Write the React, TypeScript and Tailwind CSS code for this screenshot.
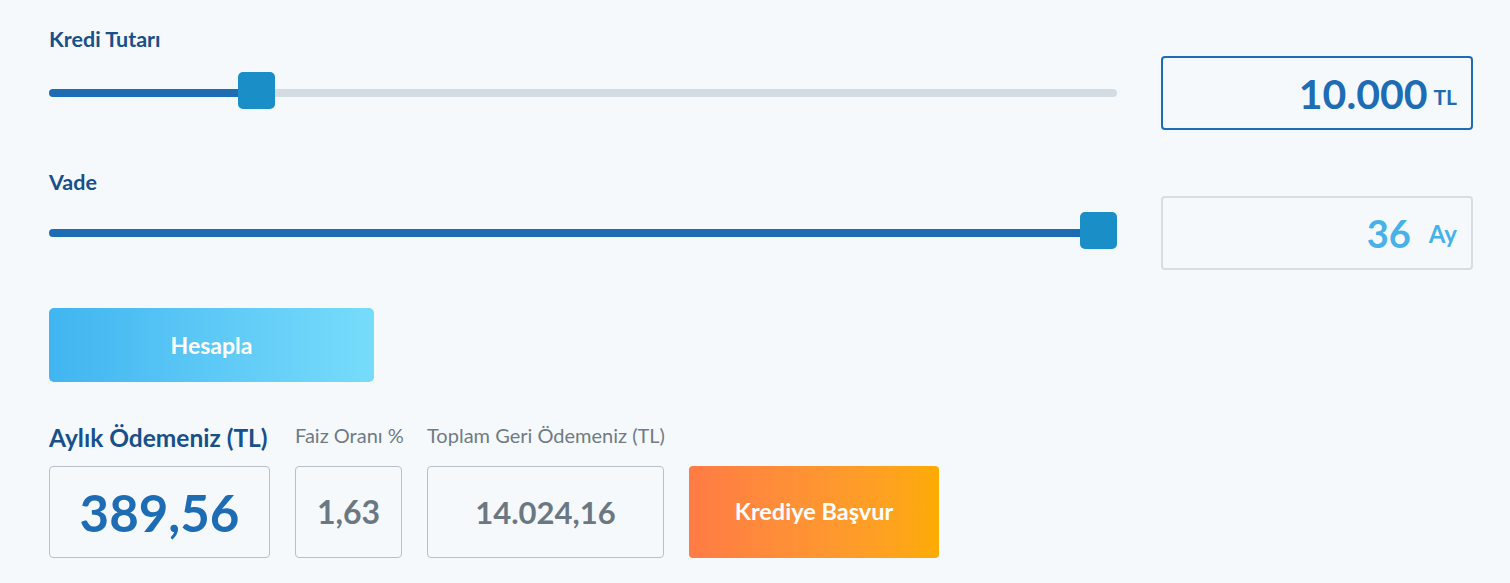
import { useState } from "react";

const FONT = { fontFamily: "Lato, 'Noto Sans', sans-serif" };

const KREDI_MIN = 1000;
const KREDI_MAX = 50000;
const VADE_MIN = 3;
const VADE_MAX = 36;
const THUMB = 37;

function Slider({ value, min, max }: { value: number; min: number; max: number }) {
  const pct = (value - min) / (max - min);
  return (
    <div className="relative flex h-[37px] flex-1 items-center">
      <div className="h-[8px] w-full overflow-hidden rounded-full bg-[#d3dce3]">
        <div
          className="h-full bg-[#1d6cb4]"
          style={{ width: `calc(${pct * 100}% - ${pct * THUMB - THUMB / 2}px)` }}
        />
      </div>
      <div
        className="absolute top-[-3px] h-[37px] w-[37px] rounded-[5px] bg-[#1a8ec6]"
        style={{ left: `calc(${pct * 100}% - ${pct * THUMB}px)` }}
      />
    </div>
  );
}

export default function App() {
  const [tutar] = useState(10000);
  const [vade] = useState(36);

  return (
    <div className="min-h-screen bg-[#f5f9fc] pl-[49px] pr-[37px] pt-[26px]" style={FONT}>
      {/* Kredi Tutarı */}
      <div className="text-[21.5px] font-bold leading-[27px] text-[#17508a]">Kredi Tutarı</div>
      <div className="mt-[3px] flex items-center gap-[44px]">
        <Slider value={tutar} min={KREDI_MIN} max={KREDI_MAX} />
        <div className="flex h-[74px] w-[312px] items-center justify-end gap-[6px] rounded-[4px] border-2 border-[#1d6cb4] pr-[14px] text-[#1d6cb4]">
          <span className="text-[41px] font-bold leading-none">10.000</span>
          <span className="mt-[6px] text-[21px] font-bold leading-none">TL</span>
        </div>
      </div>

      {/* Vade */}
      <div className="mt-[39px] text-[21.5px] font-bold leading-[27px] text-[#17508a]">Vade</div>
      <div className="flex items-center gap-[44px]">
        <Slider value={vade} min={VADE_MIN} max={VADE_MAX} />
        <div className="flex h-[74px] w-[312px] items-center justify-end gap-[18px] rounded-[4px] border-2 border-[#d6dde3] pr-[14px] text-[#47b1e9]">
          <span className="text-[38px] font-bold leading-none">{vade}</span>
          <span className="mt-[2px] text-[24px] font-bold leading-none">Ay</span>
        </div>
      </div>

      <button
        type="button"
        className="mt-[38px] flex h-[74px] w-[325px] items-center justify-center rounded-[5px] bg-gradient-to-r from-[#40b5f0] to-[#77dcfb] text-[23px] font-bold text-white"
      >
        Hesapla
      </button>

      {/* Sonuçlar */}
      <div className="mt-[40px] flex items-end gap-[25px]">
        <div className="flex w-[221px] flex-col">
          <div className="mb-[13px] whitespace-nowrap text-[24.5px] font-bold leading-[30px] text-[#17508a]">
            Aylık Ödemeniz (TL)
          </div>
          <div className="flex h-[92px] items-center justify-center rounded-[4px] border border-[#b8c1c9] text-[51px] font-bold leading-none text-[#1d6cb4]">
            389,56
          </div>
        </div>
        <div className="flex w-[107px] flex-col">
          <div className="mb-[18px] whitespace-nowrap text-[20px] leading-[26px] text-[#6f7b85]">
            Faiz Oranı %
          </div>
          <div className="flex h-[92px] items-center justify-center rounded-[4px] border border-[#b8c1c9] text-[32px] font-bold leading-none text-[#6b7882]">
            1,63
          </div>
        </div>
        <div className="flex w-[237px] flex-col">
          <div className="mb-[18px] whitespace-nowrap text-[20px] leading-[26px] text-[#6f7b85]">
            Toplam Geri Ödemeniz (TL)
          </div>
          <div className="flex h-[92px] items-center justify-center rounded-[4px] border border-[#b8c1c9] text-[31px] font-bold leading-none text-[#6b7882]">
            14.024,16
          </div>
        </div>
        <button
          type="button"
          className="flex h-[92px] w-[250px] items-center justify-center rounded-[4px] bg-gradient-to-r from-[#ff7b45] to-[#fdab00] text-[23.5px] font-bold text-white"
        >
          Krediye Başvur
        </button>
      </div>
    </div>
  );
}
